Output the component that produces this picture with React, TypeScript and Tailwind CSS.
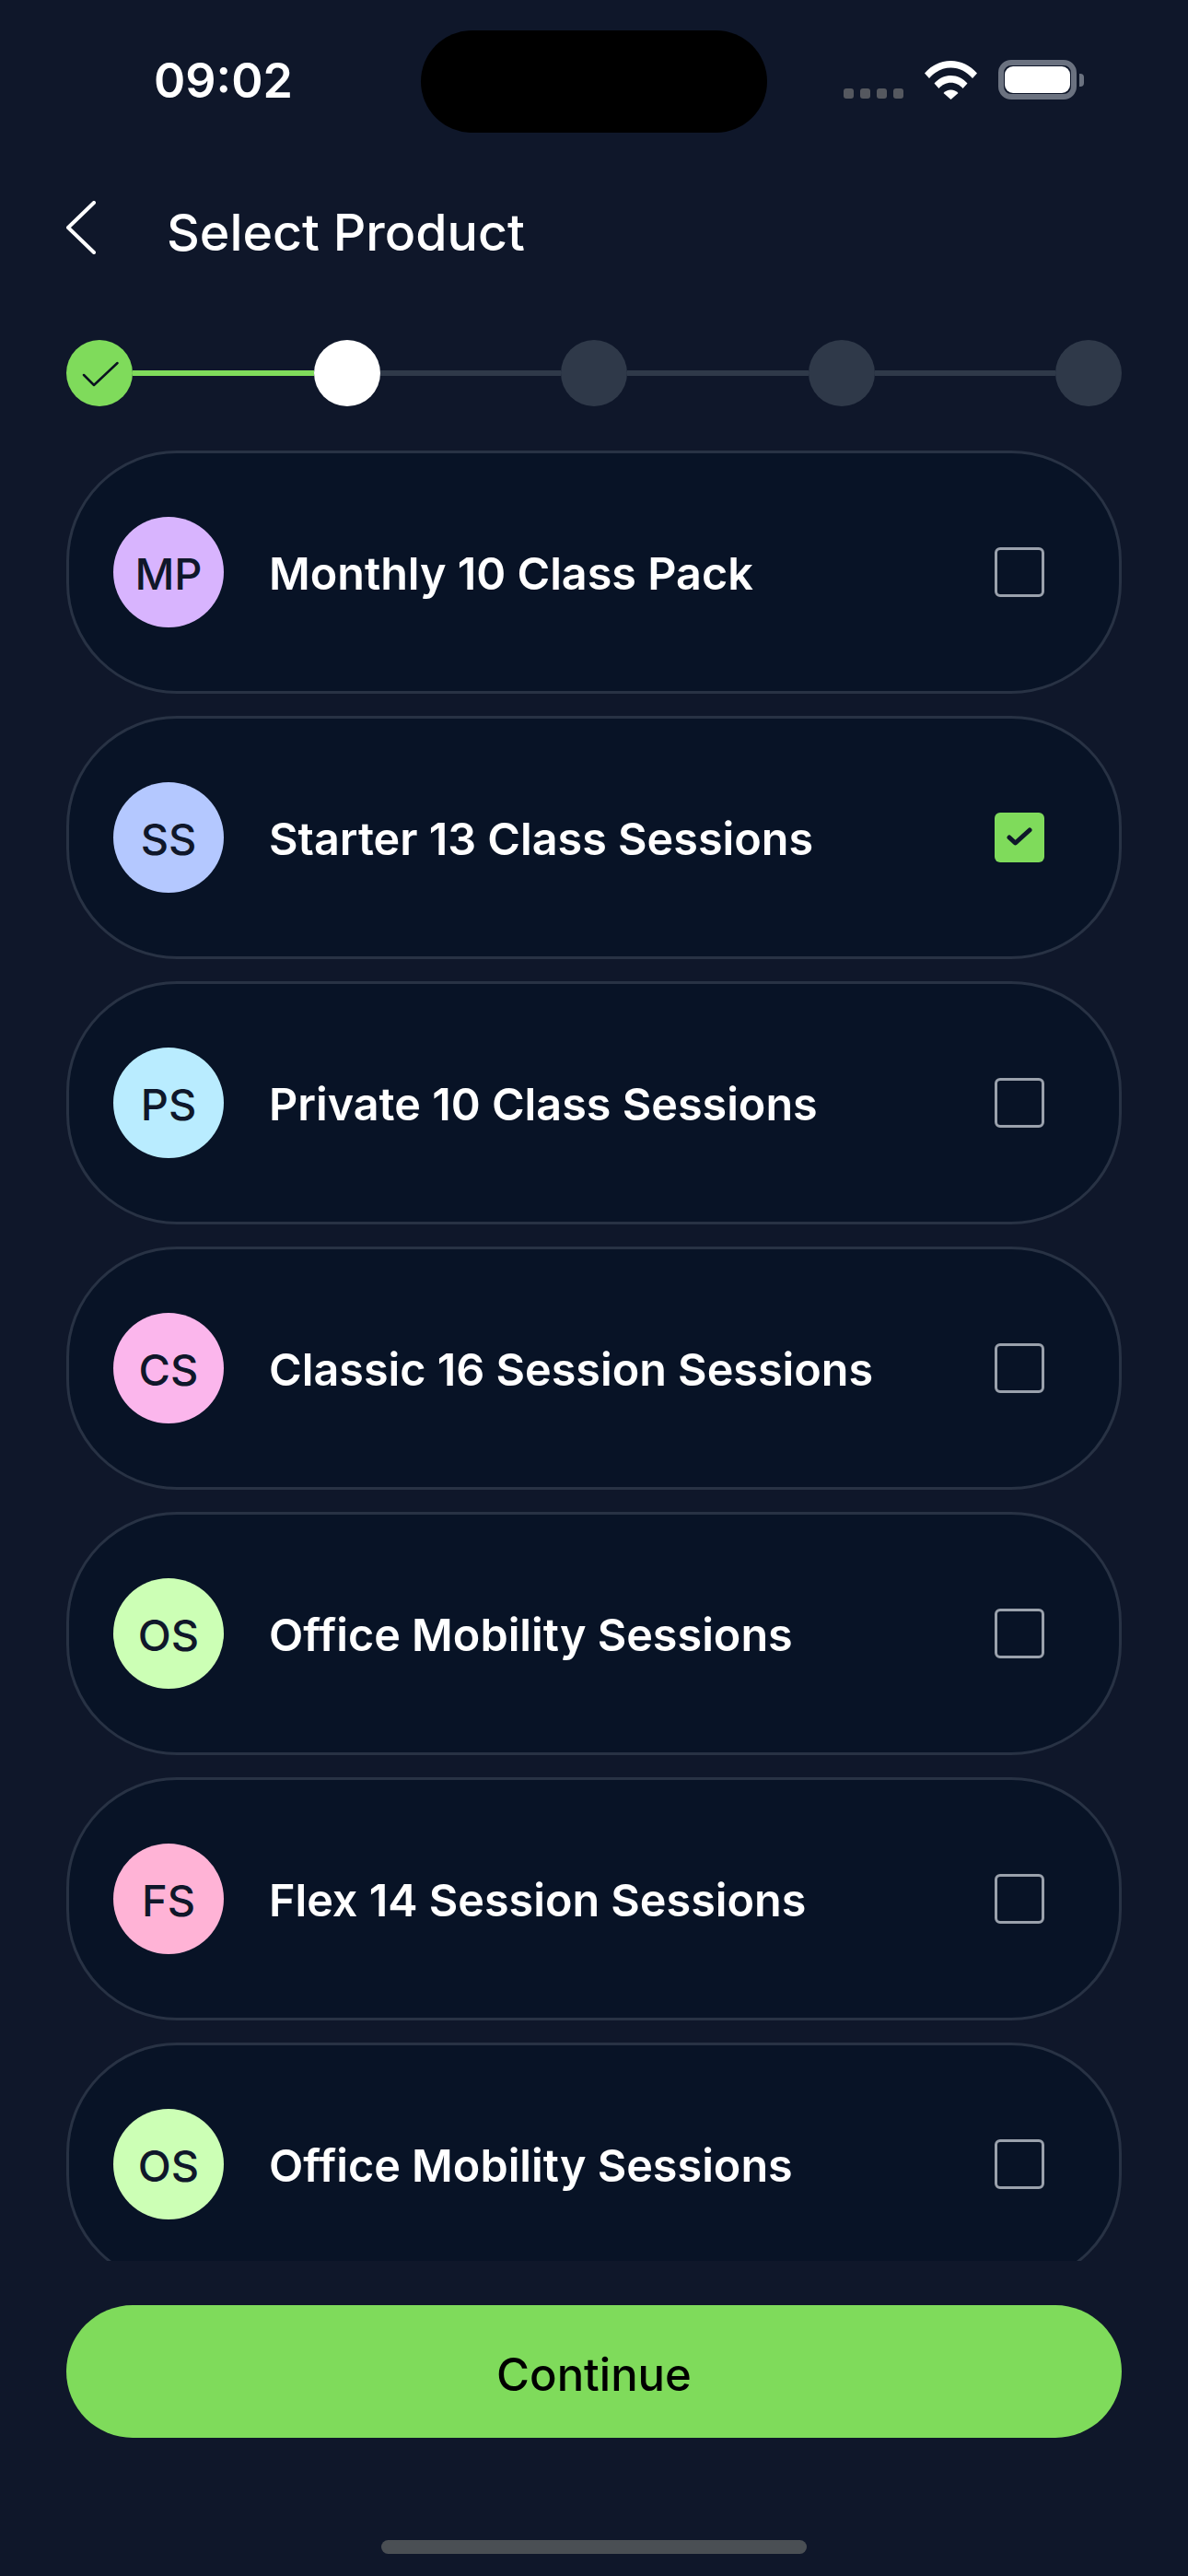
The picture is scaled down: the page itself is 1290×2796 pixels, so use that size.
const products = [
  { initials: "MP", name: "Monthly 10 Class Pack", color: "bg-[#d8b4fe]" },
  { initials: "SS", name: "Starter 13 Class Sessions", color: "bg-[#b4c8ff]", checked: true },
  { initials: "PS", name: "Private 10 Class Sessions", color: "bg-[#b9ecff]" },
  { initials: "CS", name: "Classic 16 Session Sessions", color: "bg-[#fbb6ec]" },
  { initials: "OS", name: "Office Mobility Sessions", color: "bg-[#ccffb5]" },
  { initials: "FS", name: "Flex 14 Session Sessions", color: "bg-[#ffb3d6]" },
  { initials: "OS", name: "Office Mobility Sessions", color: "bg-[#ccffb5]" },
];

const StatusBar = () => (
  <div className="flex h-[144px] shrink-0 items-start pt-[33px]">
    <div className="w-[457px] pt-[23px] pl-[167px] text-[52px] leading-[64px] font-semibold text-white">09:02</div>
    <div className="h-[111px] w-[376px] rounded-full bg-black" />
    <div className="flex items-end pt-[32px] pl-[83px]">
      <div className="flex gap-[7px] pb-[1px]">
        <span className="h-[11px] w-[11px] rounded-[3px] bg-[#55585f]" />
        <span className="h-[11px] w-[11px] rounded-[3px] bg-[#55585f]" />
        <span className="h-[11px] w-[11px] rounded-[3px] bg-[#55585f]" />
        <span className="h-[11px] w-[11px] rounded-[3px] bg-[#55585f]" />
      </div>
      <svg className="ml-[23px]" width="57" height="42" viewBox="0 0 57 42" fill="#fff">
        <path d="M0 13.5C7.5 4.8 17.6 0 28.5 0S49.5 4.8 57 13.5L52 19C45.800 11.800 37.500 7.500 28.500 7.500S11.200 11.800 5 19Z" />
        <path d="M10.500 24.500C15 19.300 21.500 16 28.500 16S42 19.300 46.500 24.500L41.500 30C38.300 26.200 33.600 23.800 28.500 23.800S18.700 26.200 15.500 30Z" />
        <path d="M20.500 35C22.500 32.700 25.300 31.500 28.500 31.500S34.500 32.700 36.500 35L28.500 42Z" />
      </svg>
      <div className="ml-[23px] flex items-center">
        <div className="h-[43px] w-[85px] rounded-[14px] border-[6px] border-[#6b7280] p-[1px]">
          <div className="h-full w-full rounded-[9px] bg-white" />
        </div>
        <div className="ml-[3px] h-[14px] w-[5px] rounded-r-[4px] bg-[#6b7280]" />
      </div>
    </div>
  </div>
);

const Stepper = () => (
  <div className="mt-[81px] flex shrink-0 items-center px-[72px]">
    <div className="flex h-[72px] w-[72px] items-center justify-center rounded-full bg-[#7fdb5b]">
      <svg className="mt-[3px] ml-[2px]" width="40" height="29" viewBox="0 0 40 29" fill="none" stroke="#0b1220" strokeWidth="2.500" strokeLinecap="round" strokeLinejoin="round">
        <path d="M2 15L13 26L38.500 2" />
      </svg>
    </div>
    <div className="h-[6px] flex-1 bg-[#7fdb5b]" />
    <div className="h-[72px] w-[72px] rounded-full bg-white" />
    <div className="h-[6px] flex-1 bg-[#2f3949]" />
    <div className="h-[72px] w-[72px] rounded-full bg-[#2f3949]" />
    <div className="h-[6px] flex-1 bg-[#2f3949]" />
    <div className="h-[72px] w-[72px] rounded-full bg-[#2f3949]" />
    <div className="h-[6px] flex-1 bg-[#2f3949]" />
    <div className="h-[72px] w-[72px] rounded-full bg-[#2f3949]" />
  </div>
);

const ProductRow = ({ initials, name, color, checked }: { initials: string; name: string; color: string; checked?: boolean }) => (
  <div className="flex h-[264px] shrink-0 items-center rounded-[120px] border-[3px] border-[#283244] bg-[#081326] pr-[81px] pl-[48px]">
    <div className={`flex h-[120px] w-[120px] shrink-0 items-center justify-center rounded-full pt-[4px] text-[47px] font-medium text-[#0f172a] ${color}`}>
      {initials}
    </div>
    <p className="ml-[49px] flex-1 pt-[4px] text-[48.500px] font-semibold text-white">{name}</p>
    {checked ? (
      <div className="flex h-[54px] w-[54px] items-center justify-center rounded-[6px] bg-[#7fdb5b]">
        <svg width="28" height="22" viewBox="0 0 28 22" fill="none" stroke="#0f172a" strokeWidth="5" strokeLinecap="round" strokeLinejoin="round">
          <path d="M3 11L9.500 17L25 3" />
        </svg>
      </div>
    ) : (
      <div className="h-[54px] w-[54px] rounded-[6px] border-[3.500px] border-[#9aa1ac]" />
    )}
  </div>
);

export default function App() {
  return (
    <div className="flex h-[2796px] w-[1290px] flex-col overflow-hidden bg-[#0f172a] font-['Inter',sans-serif]">
      <StatusBar />
      <div className="mt-[64px] flex h-[80px] shrink-0 items-center px-[72px]">
        <svg className="mt-[-2px] shrink-0" width="32" height="58" viewBox="0 0 32 58" fill="none" stroke="#fff" strokeWidth="4" strokeLinecap="round" strokeLinejoin="round">
          <path d="M30 2L2 29L30 56" />
        </svg>
        <h1 className="mt-[7px] ml-[77px] text-[55.500px] font-medium text-white">Select Product</h1>
      </div>
      <Stepper />
      <div className="mt-[48px] flex h-[1965px] shrink-0 flex-col gap-[24px] overflow-hidden px-[72px]">
        {products.map((p, i) => (
          <ProductRow key={i} {...p} />
        ))}
      </div>
      <button className="mx-[72px] mt-[48px] flex h-[144px] shrink-0 items-center justify-center rounded-full bg-[#7fdb5b] pt-[8px] text-[49px] font-medium text-black">
        Continue
      </button>
      <div className="mx-auto mt-[111px] h-[15px] w-[462px] rounded-full bg-[#4a4f54]" />
    </div>
  );
}
